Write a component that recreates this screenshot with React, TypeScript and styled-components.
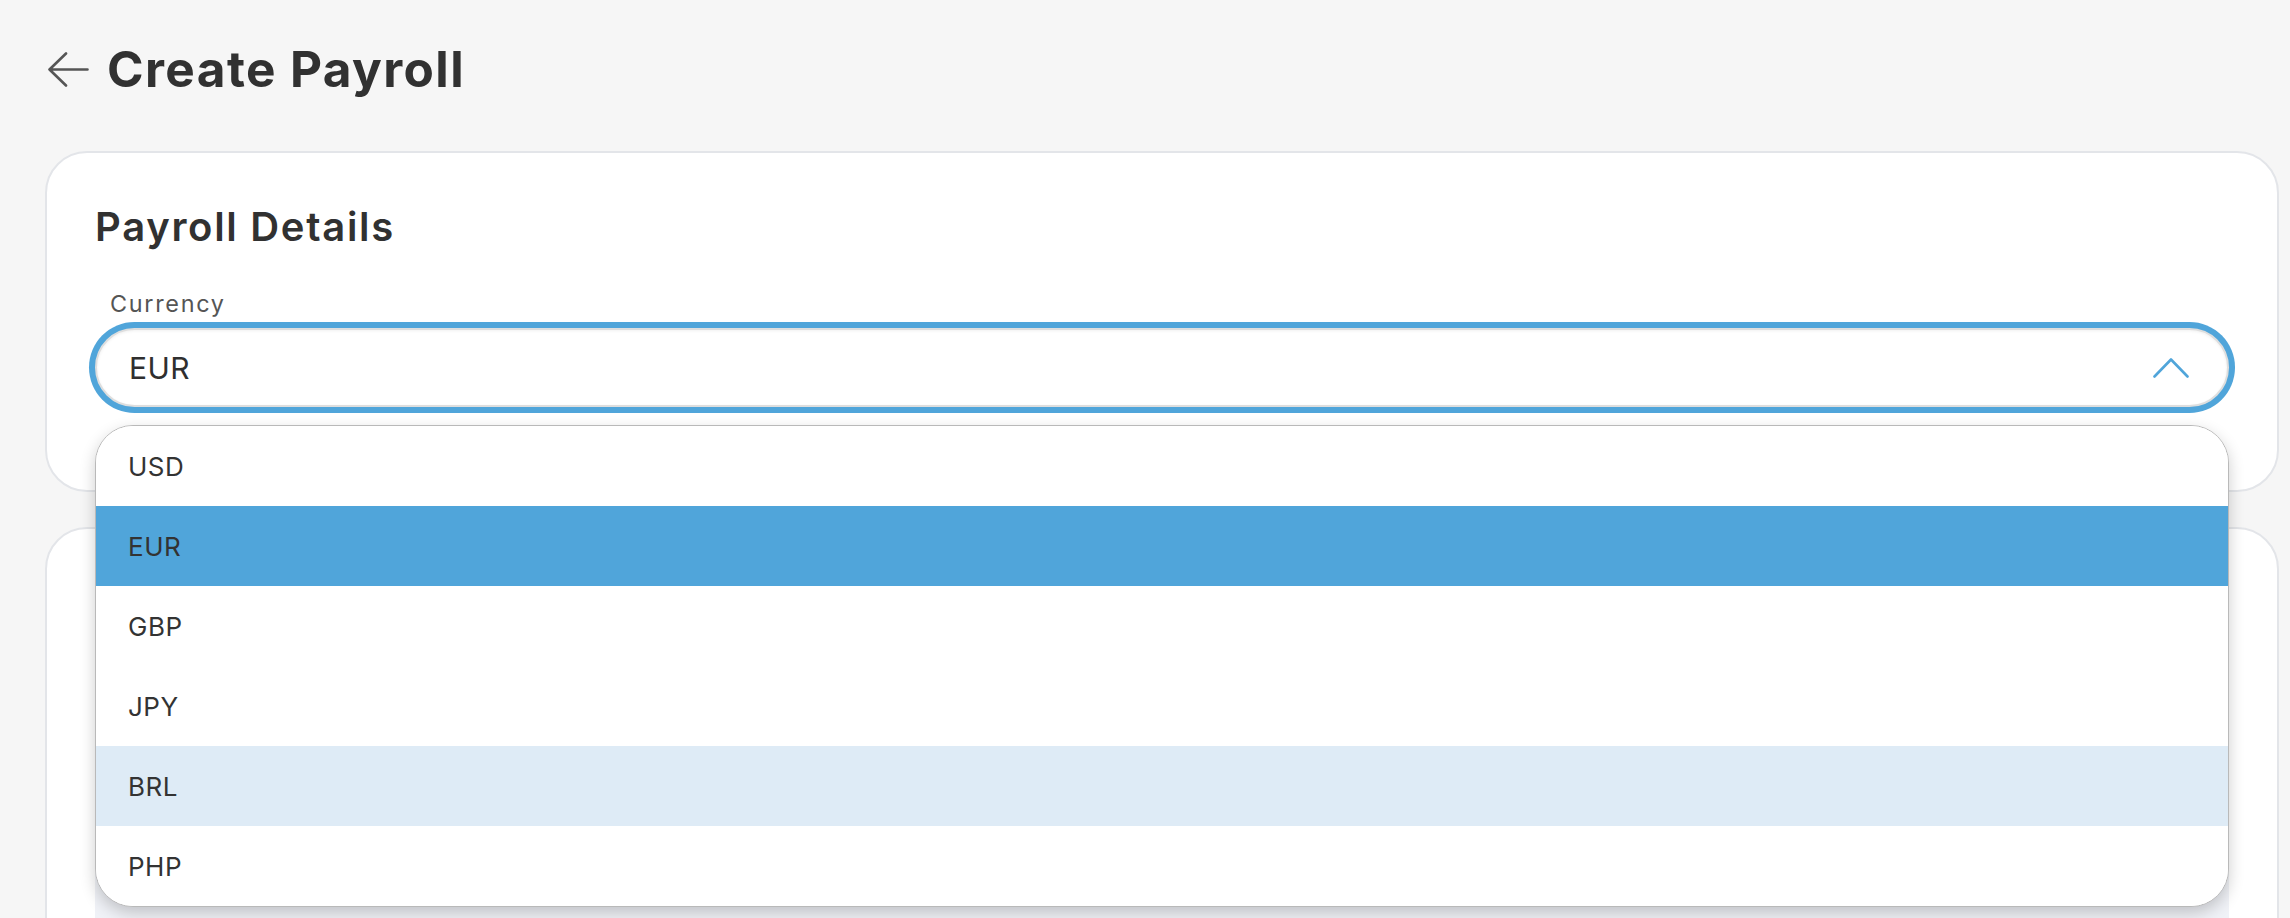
import React from "react";
import styled, { createGlobalStyle } from "styled-components";

const GlobalStyle = createGlobalStyle`
  * {
    box-sizing: border-box;
  }

  body {
    margin: 0;
    background-color: #f6f6f6;
    font-family: "Inter", "Noto Sans", sans-serif;
    color: #333333;
    overflow: hidden;
  }
`;

const Page = styled.div`
  height: 918px;
  padding: 39px 11px 0 45px;
  overflow: hidden;
`;

const Header = styled.header`
  display: flex;
  align-items: center;
  gap: 18px;
  height: 60px;
  padding-left: 3px;
`;

const BackButton = styled.button`
  display: flex;
  align-items: center;
  padding: 0;
  border: none;
  background: none;
  cursor: pointer;
`;

const PageTitle = styled.h1`
  margin: 0;
  font-size: 49.5px;
  line-height: 60px;
  font-weight: 700;
  color: #313131;
  letter-spacing: 1.4px;
`;

const Card = styled.section<{ $gap?: number }>`
  margin-top: ${({ $gap }) => $gap ?? 35}px;
  background: #ffffff;
  border: 2px solid #e3e5e9;
  border-radius: 42px;
`;

const DetailsCard = styled(Card)`
  padding: 50px 48px 83px;
`;

const PaymentsCard = styled(Card)`
  padding: 48px 48px 40px;
  border-bottom-left-radius: 0;
  border-bottom-right-radius: 0;
`;

const SectionTitle = styled.h2`
  margin: 0;
  font-size: 40px;
  line-height: 48px;
  font-weight: 600;
  color: #313131;
  letter-spacing: 1.7px;
`;

const Field = styled.div`
  margin-top: 38.5px;
`;

const Label = styled.label`
  display: block;
  padding-left: 15px;
  margin-bottom: 10.5px;
  font-size: 23.4px;
  line-height: 28px;
  color: #555555;
  letter-spacing: 1.7px;
`;

const SelectWrapper = styled.div`
  position: relative;
`;

const SelectBox = styled.div`
  display: flex;
  align-items: center;
  justify-content: space-between;
  height: 79px;
  padding: 0 38px 0 32px;
  border: 2px solid #dedede;
  border-radius: 40px;
  background: #ffffff;
  box-shadow: 0 0 0 6px #50a5da, inset 0 1px 3px rgba(0, 0, 0, 0.06);
  font-size: 30px;
  color: #2f2f2f;
  letter-spacing: 0.4px;
  cursor: pointer;
`;

const Menu = styled.ul`
  position: absolute;
  top: calc(100% + 18px);
  left: 0;
  right: 0;
  z-index: 10;
  margin: 0;
  padding: 0;
  list-style: none;
  background: #ffffff;
  border: 1px solid #b9b9b9;
  border-radius: 38px;
  overflow: hidden;
  box-shadow: 0 6px 16px rgba(0, 0, 0, 0.2);
`;

const Option = styled.li<{ $state?: "selected" | "hover" }>`
  display: flex;
  align-items: center;
  height: 80px;
  padding-left: 32px;
  font-size: 26px;
  color: #333333;
  letter-spacing: 0.5px;
  background: ${({ $state }) =>
    $state === "selected" ? "#50a5da" : $state === "hover" ? "#deebf6" : "#ffffff"};
`;

const Panel = styled.div`
  margin-top: 60px;
  padding: 28px 32px;
  background: #f0f2f7;
  border-radius: 24px;
`;

const PanelLine = styled.p`
  margin: 0;
  font-size: 26px;
  line-height: 40px;
  color: #444444;
`;

const currencies = ["USD", "EUR", "GBP", "JPY", "BRL", "PHP"];

const BackArrow = () => (
  <svg width="41" height="35" viewBox="0 0 41 35" fill="none">
    <path
      d="M1.5 17.5H39.5M18 1.5L1.5 17.5L18 33.5"
      stroke="#555555"
      strokeWidth="2.6"
      strokeLinecap="round"
      strokeLinejoin="round"
    />
  </svg>
);

const ChevronUp = () => (
  <svg width="36" height="21" viewBox="0 0 36 21" fill="none">
    <path
      d="M1.5 19.5L18 2.5L34.5 19.5"
      stroke="#50a5da"
      strokeWidth="2.6"
      strokeLinecap="round"
      strokeLinejoin="round"
    />
  </svg>
);

const App = () => {
  const selected = "EUR";
  const hovered = "BRL";

  return (
    <>
      <GlobalStyle />
      <Page>
        <Header>
          <BackButton aria-label="back">
            <BackArrow />
          </BackButton>
          <PageTitle>Create Payroll</PageTitle>
        </Header>

        <DetailsCard $gap={52}>
          <SectionTitle>Payroll Details</SectionTitle>
          <Field>
            <Label>Currency</Label>
            <SelectWrapper>
              <SelectBox>
                <span>{selected}</span>
                <ChevronUp />
              </SelectBox>
              <Menu>
                {currencies.map((code) => (
                  <Option
                    key={code}
                    $state={code === selected ? "selected" : code === hovered ? "hover" : undefined}
                  >
                    {code}
                  </Option>
                ))}
              </Menu>
            </SelectWrapper>
          </Field>
        </DetailsCard>

        <PaymentsCard>
          <SectionTitle>Employees</SectionTitle>
          <Panel>
            <PanelLine>Add the employees you want to pay in this payroll.</PanelLine>
            <PanelLine>Each employee is paid in the currency selected above.</PanelLine>
            <PanelLine>Amounts are converted at the rate shown on the review step.</PanelLine>
            <PanelLine>You can save the payroll as a draft at any time.</PanelLine>
            <PanelLine>Payments are sent once the payroll has been approved.</PanelLine>
            <PanelLine>
              Employees will get a notification by email when their payment is on the way to their bank.
            </PanelLine>
          </Panel>
        </PaymentsCard>
      </Page>
    </>
  );
};

export default App;
